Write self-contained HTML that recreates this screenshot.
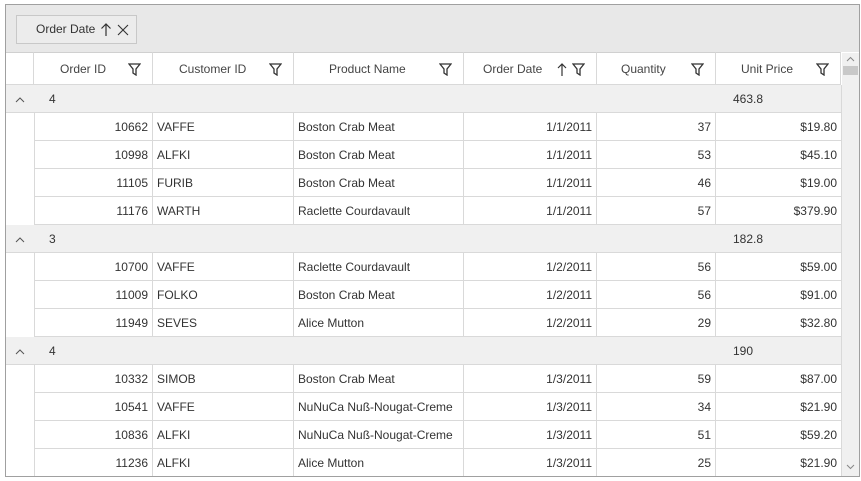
<!DOCTYPE html>
<html><head><style>
*{margin:0;padding:0;box-sizing:border-box}
body{width:861px;height:481px;background:#fff;font-family:"Liberation Sans",sans-serif;font-size:12px;color:#333;position:relative;overflow:hidden}
.a{position:absolute}
.frame{left:5px;top:4px;width:855px;height:473px;border:1px solid #a0a0a0}
.drop{left:6px;top:5px;width:853px;height:47px;background:#e8e8e8}
.chip{left:16px;top:15px;width:121px;height:29px;border:1px solid #c8c8c8;background:#ececec}
.hd{top:52px;height:33px;background:#fff;border-right:1px solid #d9d9d9;border-bottom:1px solid #d9d9d9;border-top:1px solid #d0d0d0;line-height:32px;color:#444}
.hd span{position:absolute}
.row{left:34px;width:807px;height:28px;border-bottom:1px solid #d9d9d9}
.c{position:absolute;top:0;height:27px;line-height:29px;border-right:1px solid #d9d9d9;padding:0 4px;white-space:nowrap}
.r{text-align:right}
.g{left:6px;width:835px;height:28px;background:#f0f0f0;border-bottom:1px solid #d9d9d9;line-height:29px}
svg{position:absolute}
</style></head><body>
<div class="a frame"></div>
<div class="a drop"></div>
<div class="a chip"><span class="a" style="left:19px;top:6px">Order Date</span>
<svg style="left:83px;top:7px" width="12" height="14"><path d="M6 13V1M1.5 5.5L6 1l4.5 4.5" stroke="#333" fill="none" stroke-width="1.2"/></svg>
<svg style="left:100px;top:8px" width="12" height="12"><path d="M1 1l10 10M11 1L1 11" stroke="#333" stroke-width="1.1"/></svg></div>

<div class="a hd" style="left:6px;width:28px"></div>
<div class="a hd" style="left:34px;width:119px"><span style="left:26px">Order ID</span></div>
<div class="a hd" style="left:153px;width:141px"><span style="left:26px">Customer ID</span></div>
<div class="a hd" style="left:294px;width:170px"><span style="left:35px">Product Name</span></div>
<div class="a hd" style="left:464px;width:133px"><span style="left:19px">Order Date</span>
<svg style="left:93px;top:10px" width="10" height="14"><path d="M5 13V1M1 5l4-4 4 4" stroke="#333" fill="none" stroke-width="1.2"/></svg></div>
<div class="a hd" style="left:597px;width:119px"><span style="left:24px">Quantity</span></div>
<div class="a hd" style="left:716px;width:125px"><span style="left:25px">Unit Price</span></div>
<svg style="left:128px;top:63px" width="13" height="13"><path d="M1 1h11L8 6v6L5 10V6z" stroke="#333" fill="none" stroke-width="1.3"/></svg>
<svg style="left:269px;top:63px" width="13" height="13"><path d="M1 1h11L8 6v6L5 10V6z" stroke="#333" fill="none" stroke-width="1.3"/></svg>
<svg style="left:439px;top:63px" width="13" height="13"><path d="M1 1h11L8 6v6L5 10V6z" stroke="#333" fill="none" stroke-width="1.3"/></svg>
<svg style="left:572px;top:63px" width="13" height="13"><path d="M1 1h11L8 6v6L5 10V6z" stroke="#333" fill="none" stroke-width="1.3"/></svg>
<svg style="left:691px;top:63px" width="13" height="13"><path d="M1 1h11L8 6v6L5 10V6z" stroke="#333" fill="none" stroke-width="1.3"/></svg>
<svg style="left:816px;top:63px" width="13" height="13"><path d="M1 1h11L8 6v6L5 10V6z" stroke="#333" fill="none" stroke-width="1.3"/></svg>

<div class="a" style="left:842px;top:53px;width:17px;height:423px;background:#f0f0f0"></div>
<div class="a" style="left:843px;top:66px;width:15px;height:9px;background:#c8c8c8"></div>
<svg style="left:846px;top:56px" width="9" height="6"><path d="M1 5l3.5-3.5L8 5" stroke="#888" fill="none"/></svg>
<svg style="left:846px;top:464px" width="9" height="6"><path d="M1 1l3.5 3.5L8 1" stroke="#888" fill="none"/></svg>

<div class="a" style="left:34px;top:85px;width:1px;height:391px;background:#d9d9d9"></div>

<div class="a g" style="top:85px"><span class="a" style="left:43px">4</span><span class="a" style="left:727px">463.8</span>
<svg style="left:9px;top:12px" width="10" height="6"><path d="M1 5l4-4 4 4" stroke="#555" fill="none"/></svg></div>
<div class="a row" style="top:113px"><div class="c r" style="left:0;width:119px">10662</div><div class="c" style="left:119px;width:141px">VAFFE</div><div class="c" style="left:260px;width:170px">Boston Crab Meat</div><div class="c r" style="left:430px;width:133px">1/1/2011</div><div class="c r" style="left:563px;width:119px">37</div><div class="c r" style="left:682px;width:125px;border:0">$19.80</div></div>
<div class="a row" style="top:141px"><div class="c r" style="left:0;width:119px">10998</div><div class="c" style="left:119px;width:141px">ALFKI</div><div class="c" style="left:260px;width:170px">Boston Crab Meat</div><div class="c r" style="left:430px;width:133px">1/1/2011</div><div class="c r" style="left:563px;width:119px">53</div><div class="c r" style="left:682px;width:125px;border:0">$45.10</div></div>
<div class="a row" style="top:169px"><div class="c r" style="left:0;width:119px">11105</div><div class="c" style="left:119px;width:141px">FURIB</div><div class="c" style="left:260px;width:170px">Boston Crab Meat</div><div class="c r" style="left:430px;width:133px">1/1/2011</div><div class="c r" style="left:563px;width:119px">46</div><div class="c r" style="left:682px;width:125px;border:0">$19.00</div></div>
<div class="a row" style="top:197px"><div class="c r" style="left:0;width:119px">11176</div><div class="c" style="left:119px;width:141px">WARTH</div><div class="c" style="left:260px;width:170px">Raclette Courdavault</div><div class="c r" style="left:430px;width:133px">1/1/2011</div><div class="c r" style="left:563px;width:119px">57</div><div class="c r" style="left:682px;width:125px;border:0">$379.90</div></div>

<div class="a g" style="top:225px"><span class="a" style="left:43px">3</span><span class="a" style="left:727px">182.8</span>
<svg style="left:9px;top:12px" width="10" height="6"><path d="M1 5l4-4 4 4" stroke="#555" fill="none"/></svg></div>
<div class="a row" style="top:253px"><div class="c r" style="left:0;width:119px">10700</div><div class="c" style="left:119px;width:141px">VAFFE</div><div class="c" style="left:260px;width:170px">Raclette Courdavault</div><div class="c r" style="left:430px;width:133px">1/2/2011</div><div class="c r" style="left:563px;width:119px">56</div><div class="c r" style="left:682px;width:125px;border:0">$59.00</div></div>
<div class="a row" style="top:281px"><div class="c r" style="left:0;width:119px">11009</div><div class="c" style="left:119px;width:141px">FOLKO</div><div class="c" style="left:260px;width:170px">Boston Crab Meat</div><div class="c r" style="left:430px;width:133px">1/2/2011</div><div class="c r" style="left:563px;width:119px">56</div><div class="c r" style="left:682px;width:125px;border:0">$91.00</div></div>
<div class="a row" style="top:309px"><div class="c r" style="left:0;width:119px">11949</div><div class="c" style="left:119px;width:141px">SEVES</div><div class="c" style="left:260px;width:170px">Alice Mutton</div><div class="c r" style="left:430px;width:133px">1/2/2011</div><div class="c r" style="left:563px;width:119px">29</div><div class="c r" style="left:682px;width:125px;border:0">$32.80</div></div>

<div class="a g" style="top:337px"><span class="a" style="left:43px">4</span><span class="a" style="left:727px">190</span>
<svg style="left:9px;top:12px" width="10" height="6"><path d="M1 5l4-4 4 4" stroke="#555" fill="none"/></svg></div>
<div class="a row" style="top:365px"><div class="c r" style="left:0;width:119px">10332</div><div class="c" style="left:119px;width:141px">SIMOB</div><div class="c" style="left:260px;width:170px">Boston Crab Meat</div><div class="c r" style="left:430px;width:133px">1/3/2011</div><div class="c r" style="left:563px;width:119px">59</div><div class="c r" style="left:682px;width:125px;border:0">$87.00</div></div>
<div class="a row" style="top:393px"><div class="c r" style="left:0;width:119px">10541</div><div class="c" style="left:119px;width:141px">VAFFE</div><div class="c" style="left:260px;width:170px">NuNuCa Nuß-Nougat-Creme</div><div class="c r" style="left:430px;width:133px">1/3/2011</div><div class="c r" style="left:563px;width:119px">34</div><div class="c r" style="left:682px;width:125px;border:0">$21.90</div></div>
<div class="a row" style="top:421px"><div class="c r" style="left:0;width:119px">10836</div><div class="c" style="left:119px;width:141px">ALFKI</div><div class="c" style="left:260px;width:170px">NuNuCa Nuß-Nougat-Creme</div><div class="c r" style="left:430px;width:133px">1/3/2011</div><div class="c r" style="left:563px;width:119px">51</div><div class="c r" style="left:682px;width:125px;border:0">$59.20</div></div>
<div class="a row" style="top:449px;height:27px;border:0"><div class="c r" style="left:0;width:119px">11236</div><div class="c" style="left:119px;width:141px">ALFKI</div><div class="c" style="left:260px;width:170px">Alice Mutton</div><div class="c r" style="left:430px;width:133px">1/3/2011</div><div class="c r" style="left:563px;width:119px">25</div><div class="c r" style="left:682px;width:125px;border:0">$21.90</div></div>
<div class="a" style="left:841px;top:85px;width:1px;height:391px;background:#d9d9d9"></div>
</body></html>
